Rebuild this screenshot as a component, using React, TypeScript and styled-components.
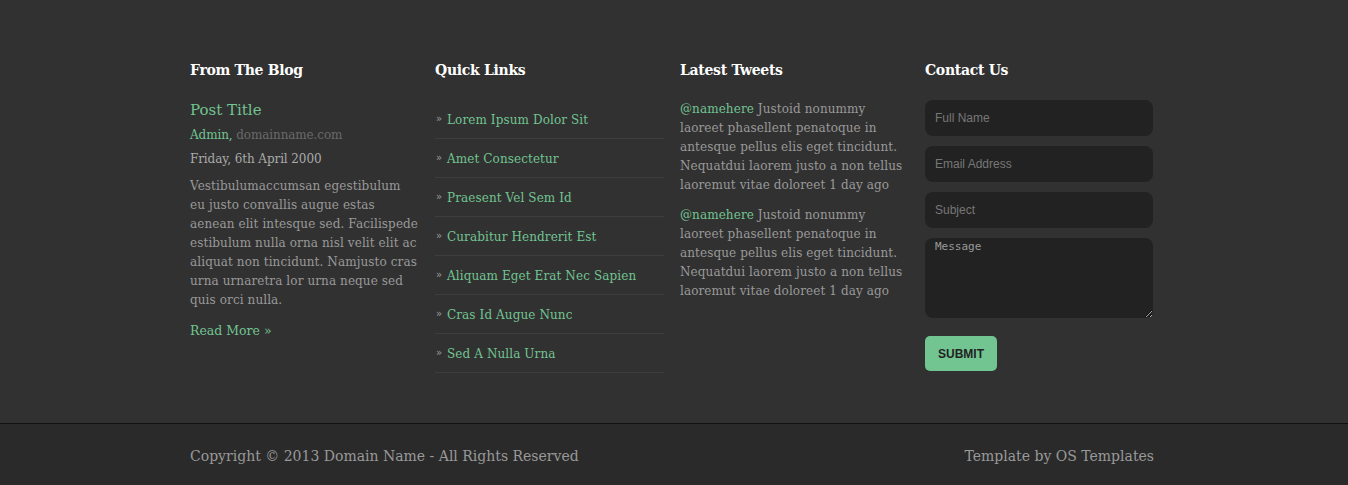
import React from 'react'
import styled, { createGlobalStyle } from 'styled-components'

const GlobalStyle = createGlobalStyle`
  html, body {
    margin: 0;
    padding: 0;
    background: #313131;
  }
  body {
    font-family: "DejaVu Serif", "Liberation Serif", serif;
    color: #999;
  }
  * {
    box-sizing: border-box;
  }
`

const green = '#72c491'

const Wrapper = styled('div')`
  width: 968px;
  margin: 0 auto;
  padding-right: 4px;
`

const Top = styled('footer')`
  background: #313131;
  padding: 60px 0 50px 0;
`

const Columns = styled('div')`
  display: grid;
  grid-template-columns: repeat(4, 229px);
  column-gap: 16px;
`

const Heading = styled('h2')`
  margin: 0 0 20px 0;
  font-size: 14px;
  line-height: 20px;
  font-weight: bold;
  color: #fff;
  font-family: "DejaVu Serif", serif;
  letter-spacing: -0.3px;
`

const PostTitle = styled('h3')`
  margin: 0 0 6px 0;
  font-size: 15px;
  line-height: 20px;
  font-weight: normal;
  color: ${green};
`

const Meta = styled('p')<{ $gap?: number }>`
  margin: 0 0 ${props => props.$gap ?? 6}px 0;
  font-size: 12px;
  line-height: 18px;
  color: #aaa;
  letter-spacing: -0.1px;
  span {
    color: ${green};
  }
  em {
    font-style: normal;
    color: #6a6a6a;
  }
`

const Text = styled('p')`
  margin: 0 0 11px 0;
  font-size: 12px;
  line-height: 19px;
  color: #999;
  letter-spacing: 0.1px;
  a {
    color: ${green};
    text-decoration: none;
  }
`

const ReadMore = styled('a')`
  display: block;
  width: fit-content;
  margin-top: 0;
  font-size: 12.5px;
  line-height: 20px;
  color: ${green};
  text-decoration: none;
`

const LinkList = styled('ul')`
  list-style: none;
  margin: 0;
  padding: 0;
`

const LinkItem = styled('li')`
  display: flex;
  align-items: center;
  height: 39px;
  border-bottom: 1px solid #3e3e3e;
  padding-top: 2px;
  &::before {
    content: '»';
    font-family: "DejaVu Sans", sans-serif;
    font-size: 10px;
    color: #999;
    width: 11px;
    margin-top: -3px;
    padding-left: 1px;
  }
  a {
    font-size: 12px;
    color: ${green};
    text-decoration: none;
    letter-spacing: 0.1px;
  }
`

const Form = styled('form')`
  display: flex;
  flex-direction: column;
  gap: 10px;
`

const Field = styled('input')`
  width: 228px;
  height: 36px;
  border: none;
  border-radius: 8px;
  background: #222;
  padding: 0 10px;
  font-family: "Liberation Sans", Arial, sans-serif;
  font-size: 12px;
  color: #ccc;
  outline: none;
  &::placeholder {
    color: #777;
  }
`

const Area = styled('textarea')`
  width: 228px;
  height: 80px;
  border: none;
  border-radius: 8px;
  background: #222;
  padding: 2px 10px;
  font-family: "DejaVu Sans Mono", monospace;
  font-size: 11px;
  color: #ccc;
  outline: none;
  &::placeholder {
    color: #999;
  }
`

const Submit = styled('button')`
  align-self: flex-start;
  margin-top: 8px;
  width: 72px;
  height: 35px;
  border: none;
  border-radius: 5px;
  background: ${green};
  color: #222;
  font-family: "Liberation Sans", Arial, sans-serif;
  font-weight: bold;
  font-size: 12px;
  text-transform: uppercase;
  cursor: pointer;
`

const Bottom = styled('div')`
  background: #2a2a2a;
  border-top: 1px solid #111;
`

const BottomRow = styled('div')`
  display: flex;
  justify-content: space-between;
  align-items: center;
  height: 64px;
  font-size: 14px;
  color: #999;
`

const links = [
  'Lorem Ipsum Dolor Sit',
  'Amet Consectetur',
  'Praesent Vel Sem Id',
  'Curabitur Hendrerit Est',
  'Aliquam Eget Erat Nec Sapien',
  'Cras Id Augue Nunc',
  'Sed A Nulla Urna',
]

const tweet = 'Justoid nonummy laoreet phasellent penatoque in antesque pellus elis eget tincidunt. Nequatdui laorem justo a non tellus laoremut vitae doloreet 1 day ago'

export default function App() {
  return (
    <>
      <GlobalStyle />
      <Top>
        <Wrapper>
          <Columns>
            <section>
              <Heading>From The Blog</Heading>
              <PostTitle>Post Title</PostTitle>
              <Meta>
                <span>Admin,</span> <em>domainname.com</em>
              </Meta>
              <Meta $gap={9}>Friday, 6th April 2000</Meta>
              <Text>
                Vestibulumaccumsan egestibulum eu justo convallis augue estas aenean elit intesque sed. Facilispede estibulum nulla orna nisl velit elit ac aliquat non tincidunt. Namjusto cras urna urnaretra lor urna neque sed quis orci nulla.
              </Text>
              <ReadMore href="#">Read More &raquo;</ReadMore>
            </section>
            <section>
              <Heading>Quick Links</Heading>
              <LinkList>
                {links.map(l => (
                  <LinkItem key={l}>
                    <a href="#">{l}</a>
                  </LinkItem>
                ))}
              </LinkList>
            </section>
            <section>
              <Heading>Latest Tweets</Heading>
              <Text>
                <a href="#">@namehere</a> {tweet}
              </Text>
              <Text>
                <a href="#">@namehere</a> {tweet}
              </Text>
            </section>
            <section>
              <Heading>Contact Us</Heading>
              <Form onSubmit={e => e.preventDefault()}>
                <Field type="text" placeholder="Full Name" />
                <Field type="text" placeholder="Email Address" />
                <Field type="text" placeholder="Subject" />
                <Area placeholder="Message" />
                <Submit type="submit">Submit</Submit>
              </Form>
            </section>
          </Columns>
        </Wrapper>
      </Top>
      <Bottom>
        <Wrapper>
          <BottomRow>
            <span>Copyright &copy; 2013 Domain Name - All Rights Reserved</span>
            <span>Template by OS Templates</span>
          </BottomRow>
        </Wrapper>
      </Bottom>
    </>
  )
}
